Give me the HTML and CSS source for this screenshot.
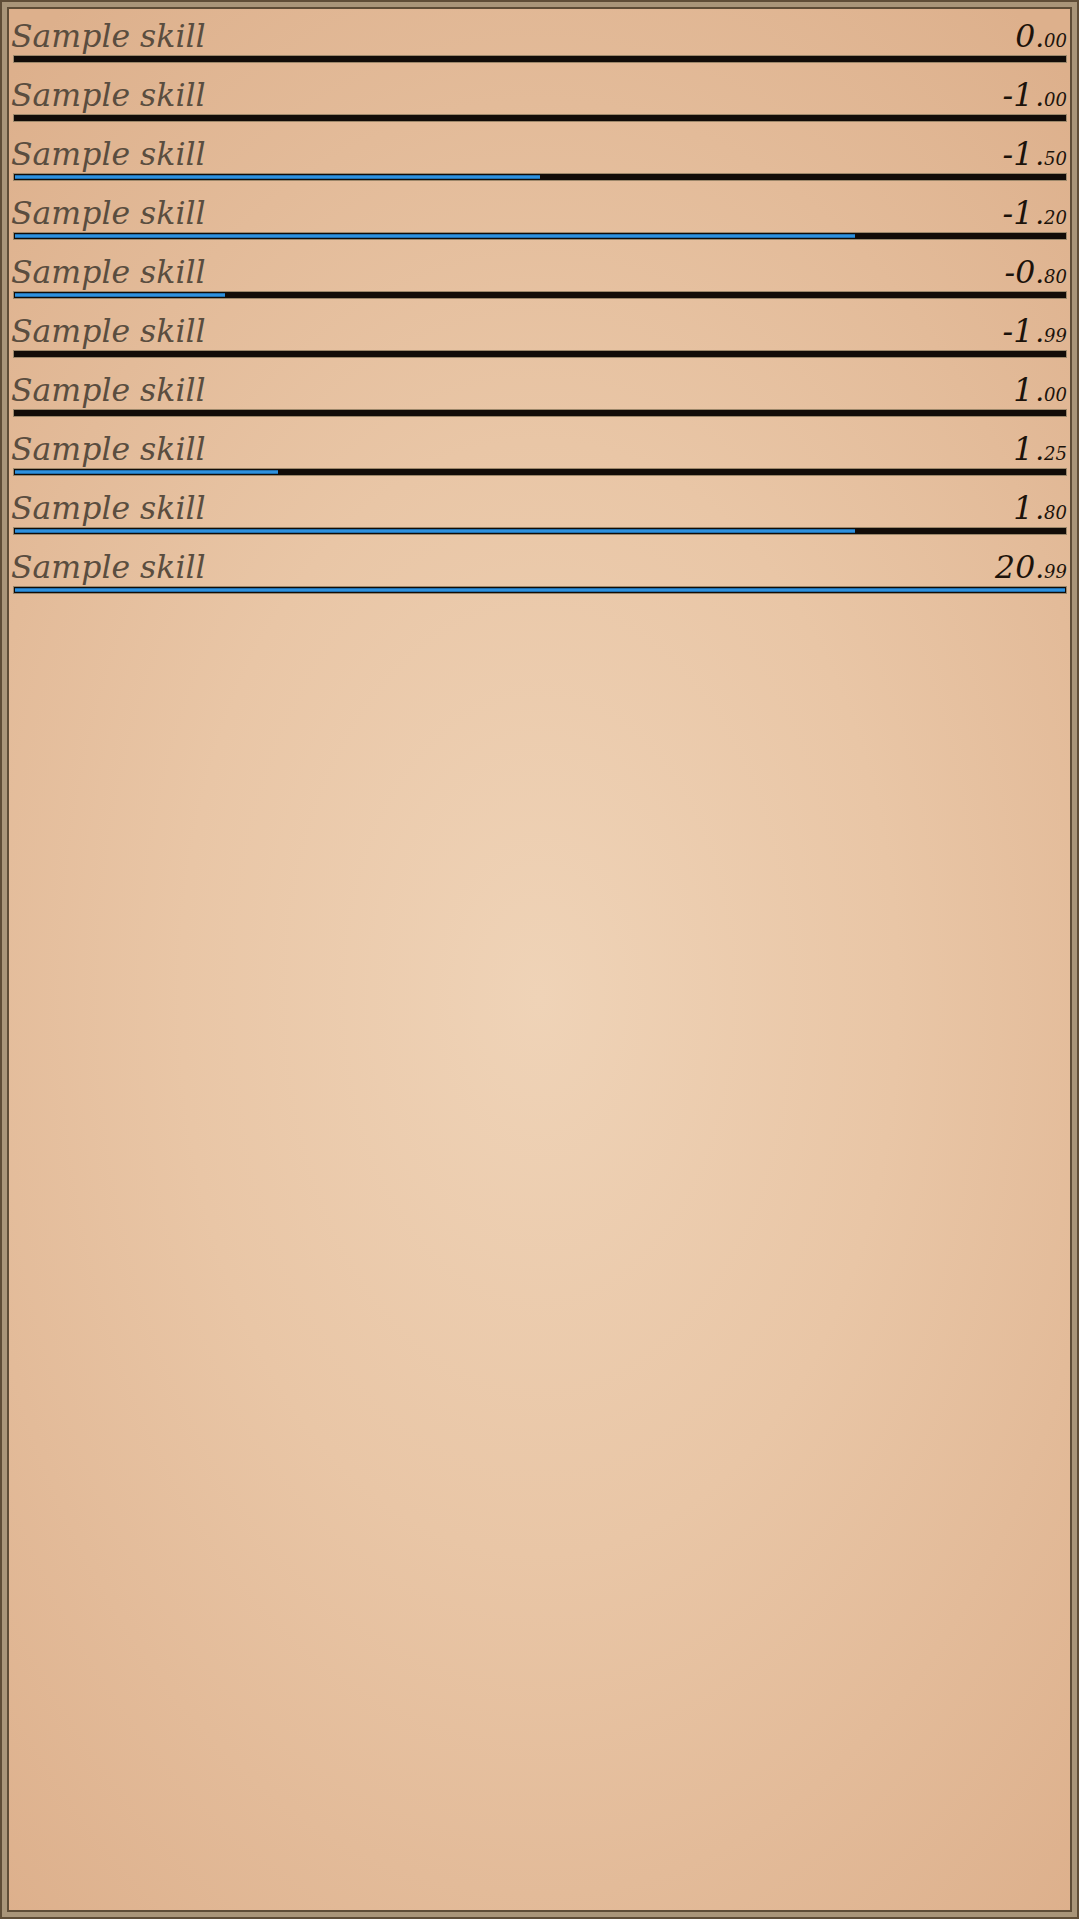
FILE: index.html
```html
<!DOCTYPE html>
<html>
<head>
<meta charset="utf-8">
<link rel="stylesheet" href="styles.css">
</head>
<body>
<div class="frame">
  <div class="panel">
    <div class="skill"><div class="line"><span class="name">Sample skill</span><span class="val">0<span class="dot">.</span><span class="dec">00</span></span></div><div class="bar"><div class="fill" style="width:0%"></div></div></div>
    <div class="skill"><div class="line"><span class="name">Sample skill</span><span class="val">-1<span class="dot wide">.</span><span class="dec">00</span></span></div><div class="bar"><div class="fill" style="width:0%"></div></div></div>
    <div class="skill"><div class="line"><span class="name">Sample skill</span><span class="val">-1<span class="dot wide">.</span><span class="dec">50</span></span></div><div class="bar"><div class="fill" style="width:50%"></div></div></div>
    <div class="skill"><div class="line"><span class="name">Sample skill</span><span class="val">-1<span class="dot wide">.</span><span class="dec">20</span></span></div><div class="bar"><div class="fill" style="width:80%"></div></div></div>
    <div class="skill"><div class="line"><span class="name">Sample skill</span><span class="val">-0<span class="dot">.</span><span class="dec">80</span></span></div><div class="bar"><div class="fill" style="width:20%"></div></div></div>
    <div class="skill"><div class="line"><span class="name">Sample skill</span><span class="val">-1<span class="dot wide">.</span><span class="dec">99</span></span></div><div class="bar"><div class="fill" style="width:0%"></div></div></div>
    <div class="skill"><div class="line"><span class="name">Sample skill</span><span class="val">1<span class="dot wide">.</span><span class="dec">00</span></span></div><div class="bar"><div class="fill" style="width:0%"></div></div></div>
    <div class="skill"><div class="line"><span class="name">Sample skill</span><span class="val">1<span class="dot wide">.</span><span class="dec">25</span></span></div><div class="bar"><div class="fill" style="width:25%"></div></div></div>
    <div class="skill"><div class="line"><span class="name">Sample skill</span><span class="val">1<span class="dot wide">.</span><span class="dec">80</span></span></div><div class="bar"><div class="fill" style="width:80%"></div></div></div>
    <div class="skill"><div class="line"><span class="name">Sample skill</span><span class="val">20<span class="dot">.</span><span class="dec">99</span></span></div><div class="bar"><div class="fill" style="width:100%"></div></div></div>
  </div>
</div>
</body>
</html>
```

FILE: styles.css
```css
html, body {
  margin: 0;
  padding: 0;
}
body {
  width: 1079px;
  height: 1919px;
  font-family: "DejaVu Serif", serif;
}
.frame {
  box-sizing: border-box;
  width: 1079px;
  height: 1919px;
  border: 2px solid #5f4d37;
  background: #a99579;
  padding: 5px;
}
.panel {
  box-sizing: border-box;
  height: 100%;
  border: 2px solid #5f4d37;
  background: radial-gradient(ellipse 75% 65% at 50% 52%, #efd3b7 0%, #e9c6a6 45%, #ddb08c 100%);
  padding: 5px 2px 0 2px;
}
.skill {
  height: 59px;
  display: flex;
  flex-direction: column;
}
.line {
  display: flex;
  justify-content: space-between;
  align-items: baseline;
  height: 41px;
  line-height: 45px;
  padding-right: 1px;
}
.name {
  font-style: italic;
  font-size: 31.5px;
  color: #5a4d3f;
}
.val {
  font-style: italic;
  font-size: 31.5px;
  color: #1c130b;
}
.dot {
  font-size: 28px;
}
.dot.wide {
  margin-left: 2px;
}
.dec {
  font-size: 18px;
}
.bar {
  margin: 0 1px 0 2px;
  height: 4px;
  border: 1px solid #9c876a;
  background: #120c08;
  padding: 1px;
}
.fill {
  height: 4px;
  box-sizing: border-box;
  background: #2f91de;
  border-top: 1px solid #1e6fae;
  border-bottom: 1px solid #1e6fae;
}
```
